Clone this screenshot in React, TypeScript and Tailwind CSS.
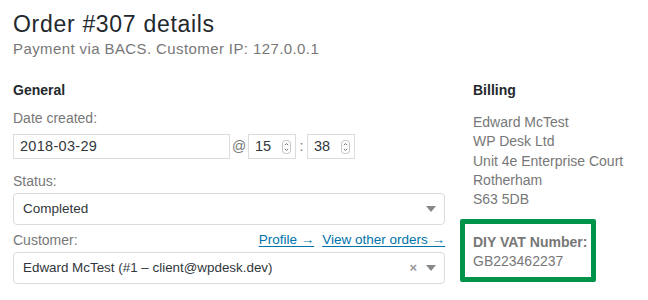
const FONT = "font-['Liberation_Sans',Arial,sans-serif]";

function Spinner() {
  return (
    <svg width="9" height="14" viewBox="0 0 9 14" className="shrink-0">
      <rect x="0.5" y="0.5" width="8" height="13" rx="3" fill="#fff" stroke="#c4c4c4" />
      <path d="M2.8 5.2 L4.5 3.6 L6.2 5.2" fill="none" stroke="#666" strokeWidth="0.9" />
      <path d="M2.8 8.8 L4.5 10.4 L6.2 8.8" fill="none" stroke="#666" strokeWidth="0.9" />
    </svg>
  );
}

function Caret() {
  return (
    <svg width="10" height="6" viewBox="0 0 10 6" className="shrink-0">
      <path d="M0 0 H10 L5 6 Z" fill="#888" />
    </svg>
  );
}

function TimeBox({ value }: { value: string }) {
  return (
    <div className="w-[48px] h-[25px] border border-[#dcdcdc] bg-white flex items-center justify-between pl-[6px] pr-[4px]">
      <span className="text-[14.5px] text-[#32373c]">{value}</span>
      <Spinner />
    </div>
  );
}

export default function App() {
  return (
    <div className={`${FONT} bg-white w-[648px] h-[300px] overflow-hidden px-[13px] pt-[11px]`}>
      <h2 className="text-[23px] leading-[26px] tracking-[0.7px] text-[#23282d]">Order #307 details</h2>
      <p className="mt-[1px] text-[15px] leading-[22px] tracking-[0.4px] text-[#777]">Payment via BACS. Customer IP: 127.0.0.1</p>

      <div className="flex gap-[28px] mt-[19px]">
        {/* general */}
        <div className="w-[432px]">
          <h3 className="text-[14px] leading-[20px] font-bold text-[#23282d] mt-[1px]">General</h3>
          <p className="mt-[8px] text-[14px] leading-[20px] text-[#777]">Date created:</p>
          <div className="mt-[6px] flex items-center">
            <div className="w-[217px] h-[25px] border border-[#dcdcdc] bg-white flex items-center px-[6px]">
              <span className="text-[14.5px] tracking-[0.3px] text-[#32373c]">2018-03-29</span>
            </div>
            <span className="w-[18px] text-center text-[14px] text-[#777]">@</span>
            <TimeBox value="15" />
            <span className="w-[11px] text-center text-[14px] text-[#777]">:</span>
            <TimeBox value="38" />
          </div>

          <p className="mt-[12px] text-[14px] leading-[20px] text-[#777]">Status:</p>
          <div className="mt-[2px] h-[32px] border border-[#dcdcdc] rounded-[4px] bg-white flex items-center justify-between pl-[9px] pr-[8px]">
            <span className="text-[13.5px] text-[#32373c]">Completed</span>
            <Caret />
          </div>

          <div className="mt-[5px] flex items-center justify-between text-[14px] leading-[20px]">
            <span className="text-[#777]">Customer:</span>
            <div className="flex gap-[8px] text-[13.5px]">
              <a href="#" className="text-[#0073aa] underline underline-offset-2">Profile →</a>
              <a href="#" className="text-[#0073aa] underline underline-offset-2">View other orders →</a>
            </div>
          </div>
          <div className="mt-[2px] h-[32px] border border-[#dcdcdc] rounded-[4px] bg-white flex items-center justify-between pl-[9px] pr-[8px]">
            <span className="text-[13.4px] text-[#32373c]">Edward McTest (#1 – client@wpdesk.dev)</span>
            <div className="flex items-center gap-[9px]">
              <span className="text-[13px] font-bold text-[#999]">×</span>
              <Caret />
            </div>
          </div>
        </div>

        {/* billing */}
        <div className="flex-1">
          <h3 className="text-[14px] leading-[20px] font-bold text-[#23282d] mt-[1px]">Billing</h3>
          <div className="mt-[13px] text-[14px] leading-[19.3px] text-[#777]">
            <p>Edward McTest</p>
            <p>WP Desk Ltd</p>
            <p>Unit 4e Enterprise Court</p>
            <p>Rotherham</p>
            <p>S63 5DB</p>
          </div>
          <div className="mt-[10px] -ml-[13px] w-[136px] border-[5px] border-[#00934a] rounded-[2px] pl-[8px] pt-[9px] pb-[6px]">
            <p className="text-[14px] leading-[19px] font-bold text-[#777]">DIY VAT Number:</p>
            <p className="text-[14px] leading-[19px] text-[#777]">GB223462237</p>
          </div>
        </div>
      </div>
    </div>
  );
}
